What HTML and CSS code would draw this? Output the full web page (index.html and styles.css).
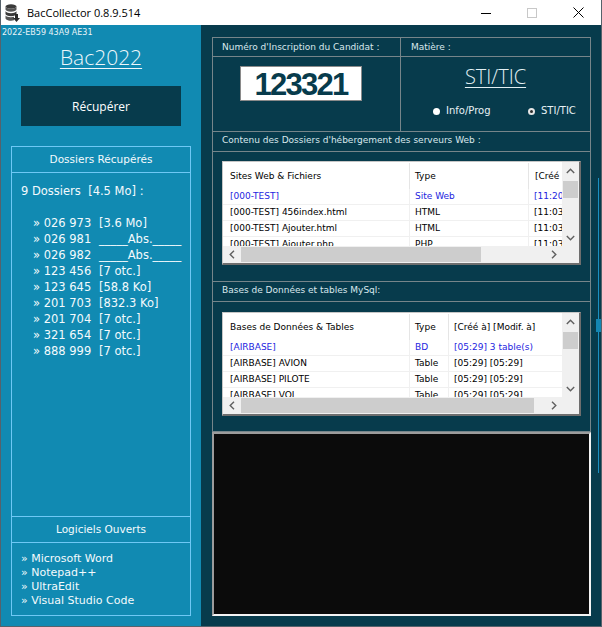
FILE: index.html
```html
<!DOCTYPE html>
<html lang="fr">
<head>
<meta charset="utf-8">
<title>BacCollector 0.8.9.514</title>
<link rel="stylesheet" href="styles.css">
</head>
<body>
<div class="window">
  <div class="titlebar">
    <svg class="app-icon" width="15" height="18" viewBox="0 0 15 18">
      <ellipse cx="6" cy="2.5" rx="5.5" ry="2.2" fill="#3a3a3a"/>
      <path d="M0.5 2.5 V5.5 A5.5 2.2 0 0 0 11.5 5.5 V2.5 A5.5 2.2 0 0 1 0.5 2.5Z" fill="#555"/>
      <path d="M0.5 7 V10 A5.5 2.2 0 0 0 11.5 10 V7 A5.5 2.2 0 0 1 0.5 7Z" fill="#3a3a3a"/>
      <path d="M0.5 11.5 V14.5 A5.5 2.2 0 0 0 9 16.3 V12.8 A5.5 2.2 0 0 1 0.5 11.5Z" fill="#555"/>
      <path d="M10 10 h3 v4 h2 l-3.5 4 l-3.5 -4 h2z" fill="#2a2a2a"/>
    </svg>
    <span class="title">BacCollector 0.8.9.514</span>
    <div class="controls">
      <span class="ctl"><svg width="10" height="10" viewBox="0 0 10 10"><path d="M0 5.5 H10" stroke="#000" stroke-width="1"/></svg></span>
      <span class="ctl"><svg width="10" height="10" viewBox="0 0 10 10"><rect x="0.5" y="0.5" width="9" height="9" fill="none" stroke="#c8c8c8" stroke-width="1"/></svg></span>
      <span class="ctl"><svg width="11" height="11" viewBox="0 0 11 11"><path d="M0.5 0.5 L10.5 10.5 M10.5 0.5 L0.5 10.5" stroke="#000" stroke-width="1"/></svg></span>
    </div>
  </div>

  <div class="main">
    <aside class="left">
      <div class="serial">2022-EB59 43A9 AE31</div>
      <div class="bac"><span>Bac2022</span></div>
      <button class="recup">Récupérer</button>
      <div class="box">
        <div class="box-head">Dossiers Récupérés</div>
        <div class="dossiers">
          <div class="summary">9 Dossiers  [4.5 Mo] :</div>
          <ul class="dlist">
            <li><span>» 026 973</span><span>[3.6 Mo]</span></li>
            <li><span>» 026 981</span><span>_____Abs._____</span></li>
            <li><span>» 026 982</span><span>_____Abs._____</span></li>
            <li><span>» 123 456</span><span>[7 otc.]</span></li>
            <li><span>» 123 645</span><span>[58.8 Ko]</span></li>
            <li><span>» 201 703</span><span>[832.3 Ko]</span></li>
            <li><span>» 201 704</span><span>[7 otc.]</span></li>
            <li><span>» 321 654</span><span>[7 otc.]</span></li>
            <li><span>» 888 999</span><span>[7 otc.]</span></li>
          </ul>
        </div>
        <div class="box-head second">Logiciels Ouverts</div>
        <ul class="apps">
          <li>» Microsoft Word</li>
          <li>» Notepad++</li>
          <li>» UltraEdit</li>
          <li>» Visual Studio Code</li>
        </ul>
      </div>
    </aside>

    <section class="right">
      <div class="content">
        <div class="frame">
          <div class="row-a">
            <div class="hcell first">Numéro d'Inscription du Candidat :</div>
            <div class="hcell second">Matière :</div>
            <div class="bcell first">
              <div class="numbox">123321</div>
            </div>
            <div class="bcell second">
              <div class="subject"><span>STI/TIC</span></div>
              <div class="radios">
                <div class="radio r1"><span class="dot"></span><span class="rlabel">Info/Prog</span></div>
                <div class="radio r2"><span class="dot checked"></span><span class="rlabel">STI/TIC</span></div>
              </div>
            </div>
          </div>

          <div class="shead">Contenu des Dossiers d'hébergement des serveurs Web :</div>
          <div class="sbody">
            <div class="list web">
              <div class="view">
                <div class="lrow lhead"><span>Sites Web &amp; Fichiers</span><span>Type</span><span>[Créé à]  [Modif. à]</span></div>
                <div class="lrow blue"><span>[000-TEST]</span><span>Site Web</span><span>[11:20] 9 fichier(s)</span></div>
                <div class="lrow"><span>[000-TEST] 456index.html</span><span>HTML</span><span>[11:03] [11:03]</span></div>
                <div class="lrow"><span>[000-TEST] Ajouter.html</span><span>HTML</span><span>[11:03] [11:03]</span></div>
                <div class="lrow"><span>[000-TEST] Ajouter.php</span><span>PHP</span><span>[11:03] [11:03]</span></div>
              </div>
              <div class="vscroll">
                <span class="sbtn"><svg width="9" height="6" viewBox="0 0 9 6"><path d="M0.8 5 L4.5 1.2 L8.2 5" fill="none" stroke="#606060" stroke-width="1.4"/></svg></span>
                <span class="vtrack"><span class="vthumb"></span></span>
                <span class="sbtn"><svg width="9" height="6" viewBox="0 0 9 6"><path d="M0.8 1 L4.5 4.8 L8.2 1" fill="none" stroke="#606060" stroke-width="1.4"/></svg></span>
              </div>
              <div class="hscroll">
                <span class="sbtn"><svg width="6" height="9" viewBox="0 0 6 9"><path d="M5 0.8 L1.2 4.5 L5 8.2" fill="none" stroke="#606060" stroke-width="1.4"/></svg></span>
                <span class="htrack"><span class="hthumb" style="width:240px"></span></span>
                <span class="sbtn"><svg width="6" height="9" viewBox="0 0 6 9"><path d="M1 0.8 L4.8 4.5 L1 8.2" fill="none" stroke="#606060" stroke-width="1.4"/></svg></span>
              </div>
              <div class="corner"></div>
            </div>
          </div>

          <div class="shead">Bases de Données et tables MySql:</div>
          <div class="sbody last">
            <div class="list db">
              <div class="view">
                <div class="lrow lhead"><span>Bases de Données &amp; Tables</span><span>Type</span><span>[Créé à]  [Modif. à]</span></div>
                <div class="lrow blue"><span>[AIRBASE]</span><span>BD</span><span>[05:29] 3 table(s)</span></div>
                <div class="lrow"><span>[AIRBASE] AVION</span><span>Table</span><span>[05:29] [05:29]</span></div>
                <div class="lrow"><span>[AIRBASE] PILOTE</span><span>Table</span><span>[05:29] [05:29]</span></div>
                <div class="lrow"><span>[AIRBASE] VOL</span><span>Table</span><span>[05:29] [05:29]</span></div>
              </div>
              <div class="vscroll">
                <span class="sbtn"><svg width="9" height="6" viewBox="0 0 9 6"><path d="M0.8 5 L4.5 1.2 L8.2 5" fill="none" stroke="#606060" stroke-width="1.4"/></svg></span>
                <span class="vtrack"><span class="vthumb"></span></span>
                <span class="sbtn"><svg width="9" height="6" viewBox="0 0 9 6"><path d="M0.8 1 L4.5 4.8 L8.2 1" fill="none" stroke="#606060" stroke-width="1.4"/></svg></span>
              </div>
              <div class="hscroll">
                <span class="sbtn"><svg width="6" height="9" viewBox="0 0 6 9"><path d="M5 0.8 L1.2 4.5 L5 8.2" fill="none" stroke="#606060" stroke-width="1.4"/></svg></span>
                <span class="htrack"><span class="hthumb" style="width:293px"></span></span>
                <span class="sbtn"><svg width="6" height="9" viewBox="0 0 6 9"><path d="M1 0.8 L4.8 4.5 L1 8.2" fill="none" stroke="#606060" stroke-width="1.4"/></svg></span>
              </div>
              <div class="corner"></div>
            </div>
          </div>
        </div>
        <div class="console"></div>
      </div>
      <div class="trackbar"><div class="tthumb"></div></div>
    </section>
  </div>
</div>
</body>
</html>
```

FILE: styles.css
```css
* { box-sizing: border-box; margin: 0; padding: 0; }

body {
  margin: 0;
  background: #ffffff;
  font-family: "DejaVu Sans", sans-serif;
}

.window {
  width: 602px;
  height: 627px;
  border: 1px solid #56626b;
  border-top: none;
  display: flex;
  flex-direction: column;
  overflow: hidden;
}

/* title bar */
.titlebar {
  flex: none;
  height: 25px;
  background: #ffffff;
  display: flex;
  align-items: center;
}
.app-icon { margin-left: 4px; flex: none; }
.title {
  margin-left: 7px;
  flex: 1;
  font-family: "Open Sans", sans-serif;
  font-size: 11px;
  color: #000000;
}
.controls { display: flex; height: 25px; }
.ctl {
  width: 46px;
  height: 25px;
  display: flex;
  align-items: center;
  justify-content: center;
}

.main { flex: 1; display: flex; }

/* left panel */
.left {
  width: 200px;
  background: #118ab2;
  color: #f4fafd;
  display: flex;
  flex-direction: column;
}
.serial {
  font-size: 8px;
  line-height: 12px;
  padding: 2px 0 0 1px;
  color: #eaf4f8;
  white-space: nowrap;
}
.bac {
  margin-top: 3px;
  text-align: center;
  font-family: "Open Sans", sans-serif;
  font-weight: 300;
  font-size: 21px;
  line-height: 30px;
  color: #eef7fb;
}
.bac span, .subject span {
  text-decoration: underline;
  text-decoration-thickness: 1px;
  text-underline-offset: 3px;
}
.recup {
  margin: 14px 0 0 20px;
  width: 160px;
  height: 40px;
  border: none;
  background: #073b4c;
  color: #ffffff;
  font-family: "Open Sans", sans-serif;
  font-size: 12px;
}
.box {
  margin: 20px 0 0 10px;
  width: 180px;
  height: 470px;
  border: 1px solid #6ec8f5;
  display: flex;
  flex-direction: column;
}
.box-head {
  flex: none;
  height: 26px;
  border-bottom: 1px solid #6ec8f5;
  text-align: center;
  font-size: 10.5px;
  line-height: 25px;
}
.box-head.second {
  height: 27px;
  border-top: 1px solid #6ec8f5;
}
.dossiers {
  flex: 1;
  padding: 10px 0 0 9px;
  font-size: 11.5px;
  line-height: 16px;
}
.summary { white-space: pre; }
.dlist {
  list-style: none;
  margin-top: 16px;
  padding-left: 12px;
}
.dlist li {
  display: grid;
  grid-template-columns: 66px auto;
  white-space: pre;
}
.apps {
  flex: none;
  height: 72px;
  list-style: none;
  padding: 9px 0 0 9px;
  font-size: 11px;
  line-height: 14px;
}

/* right panel */
.right {
  width: 400px;
  background: #073b4c;
  display: flex;
}
.content {
  margin: 12px 0 0 11px;
  width: 379px;
  display: flex;
  flex-direction: column;
}
.frame { border: 1px solid #76858a; }
.row-a {
  display: grid;
  grid-template-columns: 188px 1fr;
}
.hcell, .shead {
  font-size: 9px;
  color: #d9e8ec;
  line-height: 16px;
  white-space: nowrap;
}
.hcell {
  height: 19px;
  padding-top: 1px;
  border-bottom: 1px solid #76858a;
}
.hcell.first, .bcell.first { border-right: 1px solid #76858a; }
.hcell.first { padding-left: 9px; }
.hcell.second { padding-left: 10px; }
.bcell {
  height: 75px;
  padding-top: 1px;
  border-bottom: 1px solid #76858a;
}
.numbox {
  margin: 8px 0 0 27px;
  width: 122px;
  height: 35px;
  border: 1px solid #8a8a8a;
  background: #ffffff;
  text-align: center;
  font-family: "Liberation Sans", Arial, sans-serif;
  font-weight: bold;
  font-size: 31px;
  letter-spacing: -1.7px;
  line-height: 36px;
  color: #073b4c;
  overflow: hidden;
}
.subject {
  margin-top: 6px;
  text-align: center;
  font-family: "Open Sans", sans-serif;
  font-weight: 300;
  font-size: 20px;
  line-height: 26px;
  color: #e3f0f4;
}
.radios {
  margin: 14px 0 0 32px;
  display: flex;
  height: 14px;
  font-size: 10px;
  line-height: 14px;
  color: #e8f1f4;
}
.radio {
  display: flex;
  align-items: center;
  white-space: nowrap;
  overflow: hidden;
}
.radio.r1 { width: 95px; }
.radio.r2 { width: 48px; }
.dot {
  flex: none;
  width: 7px;
  height: 7px;
  border-radius: 50%;
  background: #ffffff;
  margin-right: 6px;
}
.dot.checked {
  background: #2e2e2e;
  border: 2px solid #e6e6e6;
}

.shead {
  height: 20px;
  padding: 0 0 0 9px;
  border-bottom: 1px solid #76858a;
}
.sbody {
  height: 130px;
  padding-top: 9px;
  border-bottom: 1px solid #76858a;
}
.sbody.last {
  height: 129px;
  padding-top: 10px;
  border-bottom: none;
}

/* list views */
.list {
  margin-left: 9px;
  width: 359px;
  height: 104px;
  border-style: solid;
  border-width: 1px 2px 2px 1px;
  border-color: #c6c6c6 #6e6e6e #6e6e6e #c6c6c6;
  background: #ffffff;
  display: grid;
  grid-template-columns: 1fr 17px;
  grid-template-rows: 1fr 17px;
}
.view {
  overflow: hidden;
  font-size: 9px;
  color: #000000;
  white-space: nowrap;
}
.lrow {
  display: grid;
  height: 16px;
  line-height: 15px;
  border-bottom: 1px solid #f0f0f0;
}
.web .lrow { grid-template-columns: 187px 119px 200px; }
.db .lrow { grid-template-columns: 187px 39px 200px; }
.lrow span {
  overflow: hidden;
  padding-left: 5px;
}
.lrow span:first-child { padding-left: 7px; }
.lrow span:nth-child(-n+2) { border-right: 1px solid #f0f0f0; }
.lrow.lhead {
  height: 27px;
  line-height: 26px;
  padding-top: 1px;
  border-bottom: none;
}
.lrow.lhead span:nth-child(-n+2) { border-right-color: #e5e5e5; }
.web .lrow.lhead span:nth-child(3) { padding-left: 6px; }
.lrow.blue { color: #2424e0; }

.vscroll {
  background: #f0f0f0;
  display: flex;
  flex-direction: column;
}
.hscroll {
  background: #f0f0f0;
  display: flex;
}
.sbtn {
  flex: none;
  width: 17px;
  height: 17px;
  display: flex;
  align-items: center;
  justify-content: center;
}
.vtrack { flex: 1; padding: 2px 1px 0 1px; }
.vthumb {
  display: block;
  height: 17px;
  background: #cdcdcd;
}
.htrack { flex: 1; padding: 1px 0 1px 1px; display: flex; }
.hthumb {
  display: block;
  height: 15px;
  background: #cdcdcd;
}
.corner { background: #f0f0f0; }

.console {
  height: 184px;
  border: 2px solid;
  border-color: #9c9c9c #f4f4f4 #f4f4f4 #9c9c9c;
  background: #0b0b0b;
}

.trackbar {
  margin: 153px 0 0 5px;
  width: 5px;
  height: 295px;
  background: linear-gradient(to right, transparent 2px, #1b8fc2 2px, #1b8fc2 3px, transparent 3px);
}
.tthumb {
  margin-top: 141px;
  height: 13px;
  background: #1486b3;
}
```
